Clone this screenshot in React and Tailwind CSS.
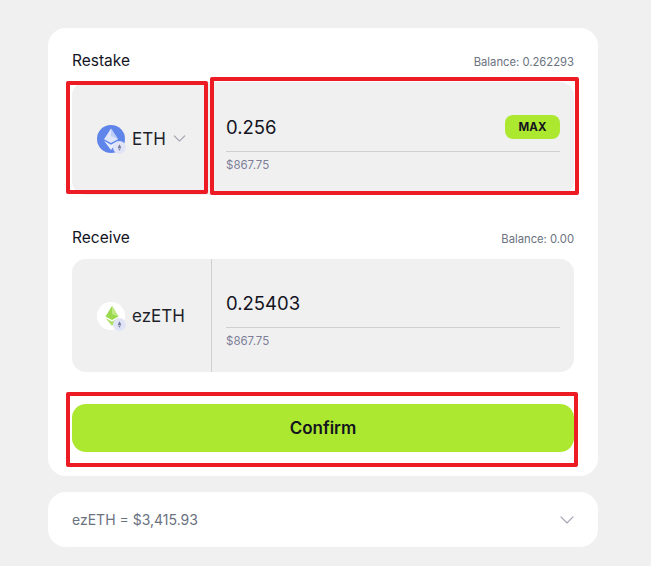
import React from "react";

function Chevron({ className }) {
  return (
    <svg viewBox="0 0 14 8" fill="none" className={className}>
      <path d="M0.7 0.7L7 7L13.3 0.7" stroke="currentColor" strokeWidth="1.2" />
    </svg>
  );
}

function MiniBadge() {
  return (
    <svg viewBox="0 0 12 12" className="absolute -right-[1px] -bottom-[1px] w-[13px] h-[13px]">
      <circle cx="6" cy="6" r="6" fill="#e1e4f6" />
      <path d="M6 3L7.6 6L6 7L4.4 6Z" fill="#73799f" />
      <path d="M6 7.5L7.6 6.5L6 9L4.4 6.5Z" fill="#73799f" />
    </svg>
  );
}

function EthIcon() {
  return (
    <div className="relative w-[28px] h-[28px] shrink-0">
      <svg viewBox="0 0 28 28" className="w-full h-full">
        <circle cx="14" cy="14" r="14" fill="#5f84ea" />
        <path d="M14 3.5L21 14.2L14 18L7 14.2Z" fill="#dfe6fb" />
        <path d="M14 3.5L21 14.2L14 11Z" fill="#bccdf8" />
        <path d="M7 15.8L14 19.7L21 15.8L14 25Z" fill="#e8edfc" />
      </svg>
      <MiniBadge />
    </div>
  );
}

function EzEthIcon() {
  return (
    <div className="relative w-[28px] h-[28px] shrink-0">
      <svg viewBox="0 0 28 28" className="w-full h-full">
        <circle cx="14" cy="14" r="14" fill="#ffffff" />
        <path d="M15 4L21.5 14.5L15 18L8.5 14.5Z" fill="#9ad84c" />
        <path d="M15 4L21.5 14.5L15 12Z" fill="#c0e884" />
        <path d="M8.5 16L15 19.5L21.5 16L15 24Z" fill="#b0e06a" />
      </svg>
      <MiniBadge />
    </div>
  );
}

function SectionHead({ label, balance }) {
  return (
    <div className="flex items-center justify-between h-[18px] mb-[12px]">
      <span className="text-[15.5px] text-[#14141f]">{label}</span>
      <span className="text-[11.25px] text-[#6b7280] mt-[2px]">Balance: {balance}</span>
    </div>
  );
}

function AmountBox({ amount, max }) {
  return (
    <div className="flex-1 px-[14px] pt-[33px]">
      <div className={max ? "flex items-center justify-between h-[24px]" : "flex items-center justify-between h-[23px]"}>
        <span className={max ? "text-[18.5px] text-[#14141f] mt-[2px]" : "text-[18.5px] text-[#14141f]"}>{amount}</span>
        {max && (
          <span className="w-[55px] h-[24px] pt-[2px] rounded-[8px] bg-[#ade830] flex items-center justify-center text-[11.5px] font-bold text-[#14141f]">
            MAX
          </span>
        )}
      </div>
      <div className="h-px bg-[#d0d0d0] mt-[12px]" />
      <div className="text-[11.5px] text-[#7d8098] mt-[5px]">$867.75</div>
    </div>
  );
}

export default function App() {
  return (
    <div className="relative w-[651px] h-[566px] bg-[#f0f0f0] pt-[28px] font-['Inter',sans-serif] overflow-hidden">
      <div className="mx-[48px] w-[550px] bg-white rounded-[18px] p-[24px]">
        <SectionHead label="Restake" balance="0.262293" />
        <div className="flex h-[113px] mb-[34px]">
          <div className="w-[139px] bg-[#f0f0f0] rounded-l-[14px] flex items-center pl-[25px]">
            <EthIcon />
            <span className="ml-[7px] mt-[3px] text-[17px] text-[#1f1f2a]">ETH</span>
            <Chevron className="ml-[7px] w-[13px] h-[7px] text-[#9a9ca8]" />
          </div>
          <div className="flex-1 bg-[#f0f0f0] rounded-r-[14px] ml-px flex">
            <AmountBox amount="0.256" max />
          </div>
        </div>

        <SectionHead label="Receive" balance="0.00" />
        <div className="flex h-[113px] bg-[#f0f0f0] rounded-[14px] mb-[32px]">
          <div className="w-[140px] border-r border-[#cfcfcf] flex items-center pl-[25px]">
            <EzEthIcon />
            <span className="ml-[7px] mt-[3px] text-[17px] text-[#1f1f2a]">ezETH</span>
          </div>
          <AmountBox amount="0.25403" />
        </div>

        <button className="w-full h-[48px] pt-[2px] rounded-[14px] bg-[#ade830] text-[17px] font-semibold text-[#14141f]">
          Confirm
        </button>
      </div>

      <div className="mx-[48px] mt-[16px] w-[550px] h-[55px] bg-white rounded-[18px] px-[24px] flex items-center justify-between">
        <span className="text-[14px] text-[#6b7280]">ezETH = $3,415.93</span>
        <Chevron className="w-[14px] h-[8px] text-[#a0a3b0]" />
      </div>

      {/* red annotation boxes drawn on top of the screenshot */}
      <div className="absolute left-[66px] top-[81px] w-[142px] h-[113px] border-4 border-[#ed1c24] rounded-[2px]" />
      <div className="absolute left-[210px] top-[77px] w-[369px] h-[118px] border-4 border-[#ed1c24] rounded-[2px]" />
      <div className="absolute left-[66px] top-[392px] w-[512px] h-[75px] border-4 border-[#ed1c24] rounded-[2px]" />
    </div>
  );
}
